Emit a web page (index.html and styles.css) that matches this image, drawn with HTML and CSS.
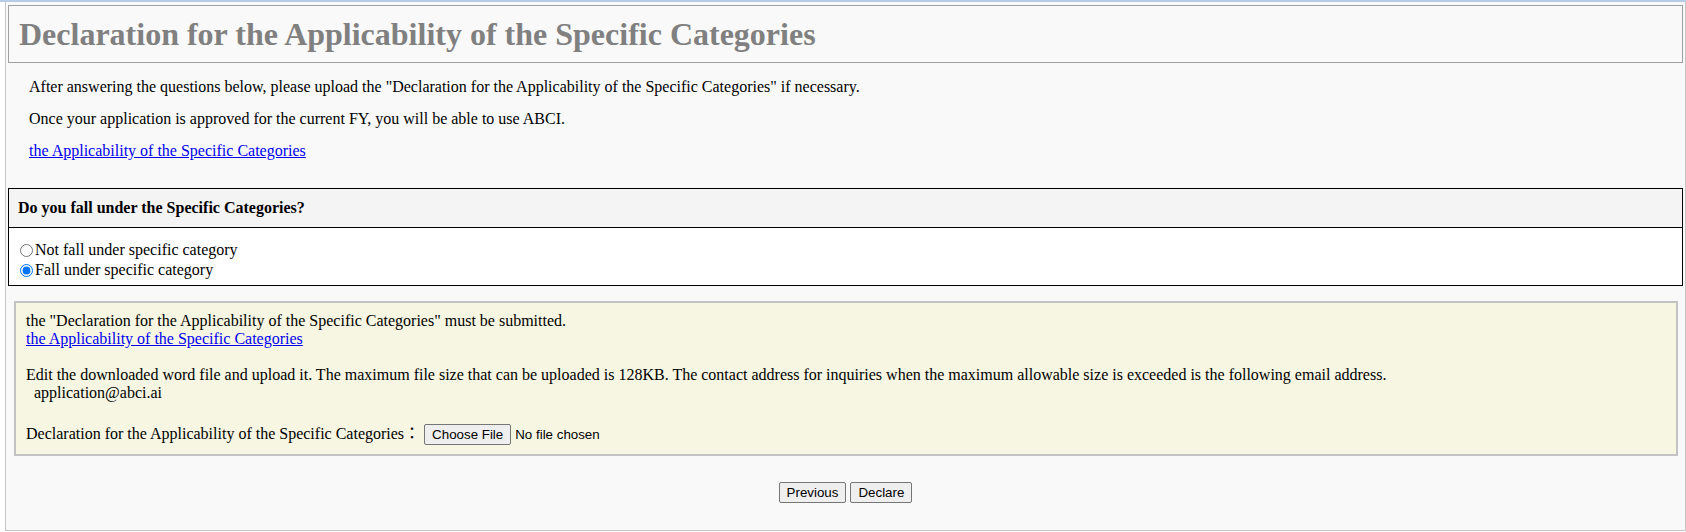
FILE: index.html
```html
<!DOCTYPE html>
<html lang="en">
<head>
<meta charset="utf-8">
<title>Declaration for the Applicability of the Specific Categories</title>
<link rel="stylesheet" href="styles.css">
</head>
<body>
<div class="page">
  <h1 class="title-box">Declaration for the Applicability of the Specific Categories</h1>
  <div class="intro">
    <p>After answering the questions below, please upload the "Declaration for the Applicability of the Specific Categories" if necessary.</p>
    <p>Once your application is approved for the current FY, you will be able to use ABCI.</p>
    <p><a href="#">the Applicability of the Specific Categories</a></p>
  </div>
  <div class="question">
    <div class="q-head">Do you fall under the Specific Categories?</div>
    <div class="q-body">
      <label class="opt"><input type="radio" name="cat">Not fall under specific category</label>
      <label class="opt"><input type="radio" name="cat" checked>Fall under specific category</label>
    </div>
  </div>
  <div class="notice">
    the "Declaration for the Applicability of the Specific Categories" must be submitted.<br>
    <a href="#">the Applicability of the Specific Categories</a><br><br>
    Edit the downloaded word file and upload it. The maximum file size that can be uploaded is 128KB. The contact address for inquiries when the maximum allowable size is exceeded is the following email address.<br>
    &nbsp;&nbsp;application@abci.ai<br><br>
    <div class="upload">Declaration for the Applicability of the Specific Categories：<span class="file-btn">Choose File</span><span class="file-name">No file chosen</span></div>
  </div>
  <div class="actions">
    <button class="btn" type="button">Previous</button>
    <button class="btn" type="button">Declare</button>
  </div>
</div>
</body>
</html>
```
FILE: styles.css
```css
html, body {
  margin: 0;
}
body {
  background: #ffffff;
  border-top: 2px solid #b5cde6;
  font-family: "Liberation Serif", "Noto Sans CJK JP", serif;
  font-size: 16px;
  color: #000;
}
a {
  color: #0000ee;
}
.page {
  margin-left: 5px;
  border: 1px solid #c6c6c6;
  border-top: none;
  background: #f9f9f9;
  padding: 3px 2px 27px;
}
.title-box {
  margin: 0;
  border: 1px solid #a0a0a0;
  padding: 10px 10px 9px;
  font-size: 32px;
  line-height: 37px;
  font-weight: bold;
  color: #808080;
}
.intro {
  display: flow-root;
  padding: 1px 21px 0;
}
.intro p {
  margin: 14px 0;
}
.question {
  margin-top: 14px;
  border: 1px solid #000;
}
.q-head {
  background: #f4f4f4;
  border-bottom: 1px solid #000;
  padding: 10px 9px;
  line-height: 18px;
  font-weight: bold;
}
.q-body {
  background: #fff;
  padding: 12px 6px 5px;
}
.opt {
  display: flex;
  align-items: center;
  height: 20px;
}
.opt input {
  margin: 0 2px 0 5px;
  width: 13px;
  height: 13px;
}
.notice {
  margin: 15px 5px 0 6px;
  border: 2px solid #c3c3c3;
  background: #f7f6e2;
  padding: 9px 10px;
}
.file-btn {
  display: inline-block;
  box-sizing: border-box;
  height: 21px;
  margin: 0 4px 0 4px;
  padding: 2px 7px;
  border: 1px solid #767676;
  border-radius: 2px;
  background: #efefef;
  font: 13.333px "Liberation Sans", Arial, sans-serif;
  line-height: 15px;
}
.file-name {
  font: 13.333px "Liberation Sans", Arial, sans-serif;
}
.actions {
  display: flex;
  justify-content: center;
  gap: 4px;
  margin-top: 26px;
}
.btn {
  box-sizing: border-box;
  height: 21px;
  margin: 0;
  padding: 0 7px;
  border: 1px solid #767676;
  border-radius: 2px;
  background: #efefef;
  color: #000;
  font: 13.333px "Liberation Sans", Arial, sans-serif;
}
```
